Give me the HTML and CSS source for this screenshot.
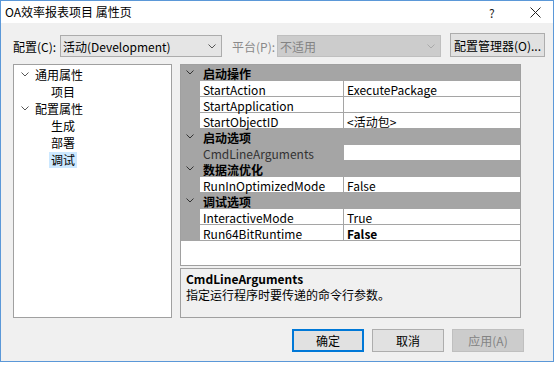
FILE: index.html
```html
<!DOCTYPE html>
<html lang="zh">
<head>
<meta charset="utf-8">
<link rel="stylesheet" href="styles.css">
</head>
<body>
<div class="window">
  <div class="titlebar">
    <span class="title">OA效率报表项目 属性页</span>
    <span class="help">?</span>
    <svg class="close" width="11" height="11" viewBox="0 0 11 11"><path d="M0.5 0.5L10.5 10.5M10.5 0.5L0.5 10.5" stroke="#222" stroke-width="1" fill="none"/></svg>
  </div>
  <div class="toolbar">
    <span class="lbl lbl-config">配置(C):</span>
    <div class="combo combo-config">
      <span>活动(Development)</span>
      <svg class="arrow" width="8" height="5" viewBox="0 0 8 5"><path d="M0.5 0.5L4 4L7.5 0.5" stroke="#555" fill="none"/></svg>
    </div>
    <span class="lbl lbl-platform">平台(P):</span>
    <div class="combo combo-platform">
      <span>不适用</span>
      <svg class="arrow" width="8" height="5" viewBox="0 0 8 5"><path d="M0.5 0.5L4 4L7.5 0.5" stroke="#aaa" fill="none"/></svg>
    </div>
    <button class="btn btn-manager">配置管理器(O)...</button>
  </div>
  <div class="main">
    <div class="tree">
      <div class="node"><svg class="chev" width="8" height="5" viewBox="0 0 8 5"><path d="M0.5 0.5L4 4L7.5 0.5" stroke="#555" fill="none"/></svg><span>通用属性</span></div>
      <div class="node child"><span>项目</span></div>
      <div class="node"><svg class="chev" width="8" height="5" viewBox="0 0 8 5"><path d="M0.5 0.5L4 4L7.5 0.5" stroke="#555" fill="none"/></svg><span>配置属性</span></div>
      <div class="node child"><span>生成</span></div>
      <div class="node child"><span>部署</span></div>
      <div class="node child"><span class="sel">调试</span></div>
    </div>
    <div class="right">
      <div class="grid">
        <div class="cat"><span class="margin"><svg width="8" height="5" viewBox="0 0 8 5"><path d="M0.5 0.5L4 4L7.5 0.5" stroke="#333" fill="none"/></svg></span><span class="cat-name">启动操作</span></div>
        <div class="row"><span class="margin"></span><span class="name">StartAction</span><span class="value">ExecutePackage</span></div>
        <div class="row"><span class="margin"></span><span class="name">StartApplication</span><span class="value"></span></div>
        <div class="row"><span class="margin"></span><span class="name">StartObjectID</span><span class="value">&lt;活动包&gt;</span></div>
        <div class="cat"><span class="margin"><svg width="8" height="5" viewBox="0 0 8 5"><path d="M0.5 0.5L4 4L7.5 0.5" stroke="#333" fill="none"/></svg></span><span class="cat-name">启动选项</span></div>
        <div class="row selrow"><span class="margin"></span><span class="name">CmdLineArguments</span><span class="value"></span></div>
        <div class="cat"><span class="margin"><svg width="8" height="5" viewBox="0 0 8 5"><path d="M0.5 0.5L4 4L7.5 0.5" stroke="#333" fill="none"/></svg></span><span class="cat-name">数据流优化</span></div>
        <div class="row"><span class="margin"></span><span class="name">RunInOptimizedMode</span><span class="value">False</span></div>
        <div class="cat"><span class="margin"><svg width="8" height="5" viewBox="0 0 8 5"><path d="M0.5 0.5L4 4L7.5 0.5" stroke="#333" fill="none"/></svg></span><span class="cat-name">调试选项</span></div>
        <div class="row"><span class="margin"></span><span class="name">InteractiveMode</span><span class="value">True</span></div>
        <div class="row"><span class="margin"></span><span class="name">Run64BitRuntime</span><span class="value bold">False</span></div>
      </div>
      <div class="desc">
        <div class="desc-title">CmdLineArguments</div>
        <div class="desc-text">指定运行程序时要传递的命令行参数。</div>
      </div>
    </div>
  </div>
  <div class="buttons">
    <button class="btn btn-ok">确定</button>
    <button class="btn">取消</button>
    <button class="btn btn-disabled">应用(A)</button>
  </div>
</div>
</body>
</html>
```

FILE: styles.css
```css
* { box-sizing: border-box; }
html, body { margin: 0; padding: 0; background: #ffffff; }
body {
  font-family: "Noto Sans CJK SC", "Noto Sans", sans-serif;
  font-size: 12px;
  color: #000;
}
.window {
  width: 554px;
  height: 362px;
  border: 1px solid #5b98d8;
  background: #f0f0f0;
  display: flex;
  flex-direction: column;
}
.titlebar {
  height: 22px;
  background: #fff;
  display: flex;
  align-items: center;
  padding-left: 4px;
  flex: none;
}
.title { flex: 1; line-height: 22px; }
.help { width: 10px; margin-right: 31px; font-size: 12px; color: #222; }
.close { margin-right: 12px; }

.toolbar {
  display: flex;
  align-items: flex-end;
  height: 24px;
  margin-top: 10px;
  padding-left: 12px;
  flex: none;
}
.lbl { height: 21px; line-height: 21px; }
.lbl-config { width: 47px; }
.lbl-platform { width: 45px; margin-left: 10px; color: #8a8a8a; }
.combo {
  height: 22px;
  border: 1px solid #acacac;
  background: #e5e5e5;
  display: flex;
  align-items: center;
  justify-content: space-between;
  padding: 0 5px 0 2px;
}
.combo-config { width: 162px; }
.combo-platform { width: 164px; background: #cccccc; border-color: #bfbfbf; color: #838383; }
.btn {
  font: inherit;
  font-size: 12px;
  height: 23px;
  width: 72px;
  padding: 0;
  background: #e1e1e1;
  border: 1px solid #adadad;
  color: #000;
}
.btn-manager { width: 95px; height: 24px; margin-left: 9px; }

.main {
  display: flex;
  margin-top: 7px;
  padding-left: 12px;
  height: 254px;
  flex: none;
}
.tree {
  width: 159px;
  border: 1px solid #a0a0a0;
  background: #fff;
  padding-top: 1px;
}
.node {
  height: 17px;
  display: flex;
  align-items: center;
  padding-left: 7px;
}
.node .chev { margin-right: 6px; }
.node.child { padding-left: 37px; }
.sel { background: #cce8ff; padding: 0 2px; margin-left: -2px; line-height: 16px; }

.right {
  margin-left: 8px;
  width: 341px;
  display: flex;
  flex-direction: column;
  gap: 2px;
}
.grid {
  height: 202px;
  border: 1px solid #a0a0a0;
  background: #fff;
}
.cat, .row {
  height: 16px;
  display: flex;
  border-bottom: 1px solid #a5a5a5;
}
.cat { background: #a5a5a5; }
.margin {
  width: 19px;
  flex: none;
  background: #a5a5a5;
  display: flex;
  align-items: center;
  justify-content: center;
  padding-right: 2px;
}
.cat-name { font-weight: bold; padding-left: 3px; line-height: 17px; }
.name {
  width: 144px;
  flex: none;
  padding-left: 3px;
  line-height: 17px;
  border-right: 1px solid #a5a5a5;
}
.value { flex: 1; padding-left: 3px; line-height: 17px; }
.selrow .name { background: #a5a5a5; color: #333; }
.bold { font-weight: bold; }

.desc {
  height: 50px;
  border: 1px solid #a0a0a0;
  background: #f0f0f0;
  padding: 2px 5px;
}
.desc-title { font-weight: bold; line-height: 16px; }
.desc-text { line-height: 15px; }

.buttons {
  display: flex;
  justify-content: flex-end;
  gap: 8px;
  margin-top: 11px;
  padding-right: 29px;
}
.btn-ok { border: 2px solid #0078d7; }
.btn-disabled { background: #cccccc; border-color: #bfbfbf; color: #838383; }
```
